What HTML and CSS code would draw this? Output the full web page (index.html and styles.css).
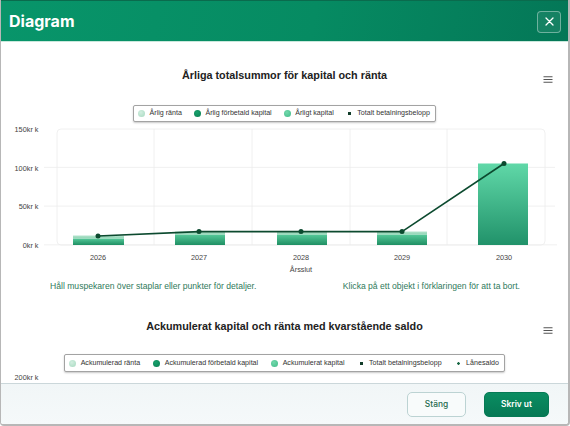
FILE: index.html
```html
<!DOCTYPE html>
<html lang="sv">
<head>
<meta charset="utf-8">
<title>Diagram</title>
<link rel="stylesheet" href="styles.css">
</head>
<body>
<div class="modal">
  <header class="modal-header">
    <h1 class="modal-title">Diagram</h1>
    <button class="close-btn" aria-label="Stäng">
      <svg width="9" height="9" viewBox="0 0 9 9"><path d="M1 1L8 8M8 1L1 8" stroke="#fff" stroke-width="1.3" stroke-linecap="round"/></svg>
    </button>
  </header>

  <main class="modal-body">
    <section class="chart chart-first">
      <div class="chart-head">
        <span class="head-spacer"></span>
        <h2 class="chart-title">Årliga totalsummor för kapital och ränta</h2>
        <span class="menu-icon"><svg width="10" height="7" viewBox="0 0 10 7"><path d="M0.5 0.75H9.5M0.5 3.5H9.5M0.5 6.25H9.5" stroke="#555" stroke-width="1.1"/></svg></span>
      </div>
      <div class="legend-wrap">
        <ul class="legend">
          <li class="legend-item"><span class="marker m-light"></span>Årlig ränta</li>
          <li class="legend-item"><span class="marker m-dark"></span>Årlig förbetald kapital</li>
          <li class="legend-item"><span class="marker m-mid"></span>Årligt kapital</li>
          <li class="legend-item"><span class="marker m-dot"></span>Totalt betalningsbelopp</li>
        </ul>
      </div>
      <svg class="plot plot-first" width="568" height="159" viewBox="1 123 568 159">
        <defs>
          <linearGradient id="gBig" x1="0" y1="0" x2="0" y2="1">
            <stop offset="0" stop-color="#60d8a8"/>
            <stop offset="1" stop-color="#21926a"/>
          </linearGradient>
          <linearGradient id="gSmall" x1="0" y1="0" x2="0" y2="1">
            <stop offset="0" stop-color="#55c999"/>
            <stop offset="1" stop-color="#1f8f63"/>
          </linearGradient>
          <linearGradient id="gLight" x1="0" y1="0" x2="0" y2="1">
            <stop offset="0" stop-color="#b4e3cd"/>
            <stop offset="1" stop-color="#8fd4b4"/>
          </linearGradient>
        </defs>
        <g class="grid">
          <rect x="57" y="130" width="488" height="116" rx="4"/>
          <line x1="44" y1="168.4" x2="555" y2="168.4"/>
          <line x1="44" y1="207.1" x2="555" y2="207.1"/>
          <line x1="44" y1="245.8" x2="557" y2="245.8"/>
          <line x1="154" y1="130" x2="154" y2="246"/>
          <line x1="252" y1="130" x2="252" y2="246"/>
          <line x1="350" y1="130" x2="350" y2="246"/>
          <line x1="447" y1="130" x2="447" y2="246"/>
        </g>
        <g class="axis-label y-labels">
          <text x="38.5" y="132.8">150kr k</text>
          <text x="38.5" y="171.5">100kr k</text>
          <text x="38.5" y="210.3">50kr k</text>
          <text x="38.5" y="249">0kr k</text>
        </g>
        <g class="bars">
          <rect x="73" y="239.5" width="51" height="6.5" fill="url(#gSmall)"/>
          <rect x="73" y="236.5" width="51" height="3" fill="url(#gLight)"/>
          <rect x="175" y="235.5" width="50" height="10.5" fill="url(#gSmall)"/>
          <rect x="175" y="232.5" width="50" height="3" fill="url(#gLight)"/>
          <rect x="277" y="235.5" width="50" height="10.5" fill="url(#gSmall)"/>
          <rect x="277" y="232.5" width="50" height="3" fill="url(#gLight)"/>
          <rect x="377" y="235.5" width="50" height="10.5" fill="url(#gSmall)"/>
          <rect x="377" y="232.5" width="50" height="3" fill="url(#gLight)"/>
          <rect x="478" y="164.5" width="50" height="81.5" fill="url(#gBig)"/>
        </g>
        <g class="series-line">
          <polyline points="98,237 199,232.6 301,232.6 402,232.6 504,164.5"/>
          <circle cx="98" cy="237" r="2.5"/>
          <circle cx="199" cy="232.6" r="2.5"/>
          <circle cx="301" cy="232.6" r="2.5"/>
          <circle cx="402" cy="232.6" r="2.5"/>
          <circle cx="504" cy="164.5" r="2.5"/>
        </g>
        <g class="axis-label x-labels">
          <text x="98" y="261">2026</text>
          <text x="199" y="261">2027</text>
          <text x="301" y="261">2028</text>
          <text x="402" y="261">2029</text>
          <text x="504" y="261">2030</text>
          <text x="301" y="272.5">Årsslut</text>
        </g>
      </svg>
      <div class="hints">
        <p class="hint">Håll muspekaren över staplar eller punkter för detaljer.</p>
        <p class="hint">Klicka på ett objekt i förklaringen för att ta bort.</p>
      </div>
    </section>

    <section class="chart chart-second">
      <div class="chart-head">
        <span class="head-spacer"></span>
        <h2 class="chart-title">Ackumulerat kapital och ränta med kvarstående saldo</h2>
        <span class="menu-icon"><svg width="10" height="7" viewBox="0 0 10 7"><path d="M0.5 0.75H9.5M0.5 3.5H9.5M0.5 6.25H9.5" stroke="#555" stroke-width="1.1"/></svg></span>
      </div>
      <div class="legend-wrap">
        <ul class="legend">
          <li class="legend-item"><span class="marker m-light"></span>Ackumulerad ränta</li>
          <li class="legend-item"><span class="marker m-dark"></span>Ackumulerad förbetald kapital</li>
          <li class="legend-item"><span class="marker m-mid"></span>Ackumulerat kapital</li>
          <li class="legend-item"><span class="marker m-dot"></span>Totalt betalningsbelopp</li>
          <li class="legend-item"><span class="marker m-tiny"></span>Lånesaldo</li>
        </ul>
      </div>
      <svg class="plot plot-second" width="568" height="40" viewBox="1 374 568 40">
        <g class="axis-label y-labels">
          <text x="38.5" y="382.3">200kr k</text>
        </g>
      </svg>
    </section>
  </main>

  <footer class="modal-footer">
    <button class="btn btn-secondary">Stäng</button>
    <button class="btn btn-primary">Skriv ut</button>
  </footer>
</div>
</body>
</html>
```

FILE: styles.css
```css
html, body {
  margin: 0;
  padding: 0;
}

body {
  width: 570px;
  height: 426px;
  overflow: hidden;
  background: #ffffff;
  font-family: "Liberation Sans", Arial, sans-serif;
}

.modal {
  box-sizing: border-box;
  width: 570px;
  height: 426px;
  display: flex;
  flex-direction: column;
  border-left: 1px solid #b7b7b7;
  border-right: 2px solid #b7b7b7;
  border-bottom: 2px solid #b7b7b7;
  border-radius: 0 0 4px 4px;
  overflow: hidden;
  background: #ffffff;
}

/* Header */
.modal-header {
  flex: none;
  height: 42px;
  box-sizing: border-box;
  display: flex;
  align-items: center;
  justify-content: space-between;
  padding: 0 7px 0 8px;
  background: linear-gradient(100deg, #08956a 0%, #068b62 55%, #047757 100%);
  border-top: 1px solid #0a6b4d;
  border-bottom: 1px solid #c9e8dc;
}

.modal-title {
  margin: 0;
  font-family: Inter, "Liberation Sans", sans-serif;
  font-size: 16px;
  font-weight: 700;
  color: #ffffff;
  line-height: 20px;
}

.close-btn {
  width: 24px;
  height: 22px;
  margin-top: 1px;
  padding: 0;
  display: flex;
  align-items: center;
  justify-content: center;
  background: rgba(255, 255, 255, 0.07);
  border: 1px solid rgba(255, 255, 255, 0.38);
  border-radius: 4px;
}

/* Body */
.modal-body {
  flex: 1;
  min-height: 0;
  overflow: hidden;
  background: #ffffff;
}

.chart {
  display: flex;
  flex-direction: column;
}

.chart-first {
  padding-top: 26px;
}

.chart-second {
  padding-top: 27px;
}

.chart-head {
  display: grid;
  grid-template-columns: 1fr auto 1fr;
  height: 14px;
}

.chart-title {
  margin: 0;
  font-size: 10.8px;
  line-height: 14px;
  font-weight: 700;
  color: #222222;
  white-space: nowrap;
}

.menu-icon {
  justify-self: end;
  align-self: start;
  margin-right: 15px;
  margin-top: 8px;
  width: 10px;
  height: 7px;
  display: block;
}

.menu-icon svg {
  display: block;
}

.legend-wrap {
  display: flex;
  justify-content: center;
  margin-top: 22.7px;
}

.chart-second .legend-wrap {
  margin-top: 21.7px;
}

.legend {
  list-style: none;
  margin: 0;
  padding: 0 5px 0 4px;
  height: 17px;
  box-sizing: border-box;
  display: flex;
  align-items: center;
  gap: 12px;
  background: #ffffff;
  border: 1px solid #a3a3a3;
  border-radius: 2px;
  box-shadow: 0 1px 2px rgba(0, 0, 0, 0.22);
}

.chart-second .legend {
  height: 18px;
  gap: 13px;
}

.legend-item {
  display: flex;
  align-items: center;
  gap: 4.5px;
  font-size: 7.1px;
  line-height: 9px;
  color: #333333;
  white-space: nowrap;
}

.marker {
  width: 7px;
  height: 7px;
  display: flex;
  align-items: center;
  justify-content: center;
  border-radius: 50%;
  flex: none;
}

.m-light {
  background: radial-gradient(circle at 40% 35%, #d2eee0, #a6d9c0);
}

.m-dark {
  background: radial-gradient(circle at 40% 35%, #17a06c, #0a7f52);
}

.m-mid {
  background: radial-gradient(circle at 40% 35%, #73d8ac, #3fbb88);
}

.m-dot {
  background: radial-gradient(circle, #123d2a 0 1.7px, transparent 2px);
}

.m-tiny {
  background: radial-gradient(circle, #1c6a47 0 1.2px, transparent 1.5px);
}

/* Plot */
.plot {
  display: block;
  flex: none;
}

.grid rect,
.grid line {
  fill: none;
  stroke: #ececec;
  stroke-width: 0.8;
}

.axis-label text {
  font-family: "Liberation Sans", Arial, sans-serif;
  font-size: 7.3px;
  fill: #444444;
}

.y-labels text {
  text-anchor: end;
}

.x-labels text {
  text-anchor: middle;
}

.series-line polyline {
  fill: none;
  stroke: #0c4a2f;
  stroke-width: 1.6;
  stroke-linejoin: round;
}

.series-line circle {
  fill: #0c4a2f;
}

/* Hints */
.hints {
  display: flex;
  justify-content: space-between;
  padding: 0 48px 0 49px;
}

.hint {
  margin: 0;
  font-size: 8.6px;
  line-height: 11px;
  color: #2f7a5b;
  white-space: nowrap;
}

/* Footer */
.modal-footer {
  flex: none;
  height: 41px;
  box-sizing: border-box;
  display: flex;
  align-items: center;
  justify-content: flex-end;
  gap: 18px;
  padding: 0 19px 0 0;
  background: linear-gradient(180deg, #f1f6f7, #f5f9fa);
  border-top: 1px solid #cbd7da;
}

.btn {
  height: 25px;
  padding: 0;
  border-radius: 5px;
  font-family: Inter, "Liberation Sans", sans-serif;
  font-size: 8.4px;
  font-weight: 500;
  line-height: 1;
  white-space: nowrap;
  cursor: pointer;
}

.btn-secondary {
  width: 59px;
  background: #f8fbfb;
  border: 1px solid #bcd3d3;
  color: #1f6b4f;
}

.btn-primary {
  width: 65px;
  background: linear-gradient(180deg, #0a8d61, #067955);
  border: 1px solid #067a55;
  color: #ffffff;
  font-weight: 600;
}
```
